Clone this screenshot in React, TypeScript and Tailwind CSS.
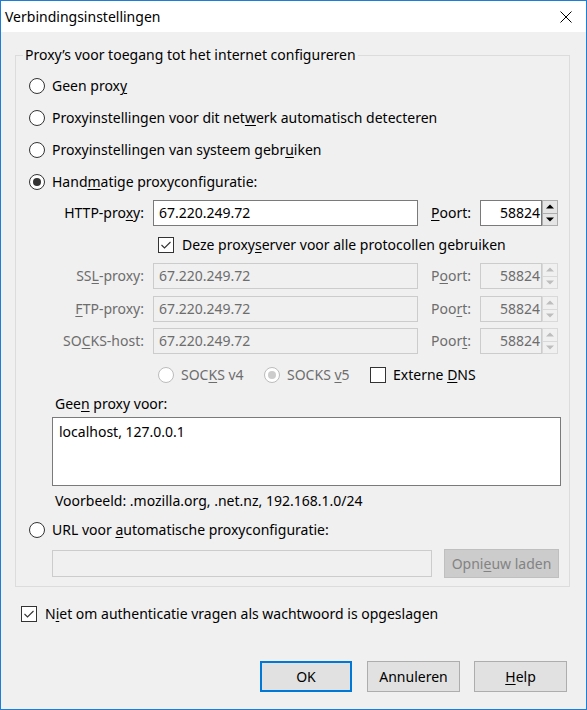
import React from "react";

function Radio({ checked = false, disabled = false }: { checked?: boolean; disabled?: boolean }) {
  return (
    <span
      className={`w-[16px] h-[16px] rounded-full border bg-white shrink-0 flex items-center justify-center ${
        disabled ? "border-[#bcbcbc]" : "border-[#333333]"
      }`}
    >
      {checked && (
        <span className={`w-[8px] h-[8px] rounded-full ${disabled ? "bg-[#cccccc]" : "bg-[#333333]"}`} />
      )}
    </span>
  );
}

function Check({ checked = false }: { checked?: boolean }) {
  return (
    <span className="w-[16px] h-[16px] border border-[#333333] bg-white shrink-0 flex items-center justify-center">
      {checked && (
        <svg width="12" height="12" viewBox="0 0 12 12">
          <path d="M1.5 6 L4.5 9 L10.5 3" fill="none" stroke="#333333" strokeWidth="1.1" />
        </svg>
      )}
    </span>
  );
}

function U({ children }: { children: React.ReactNode }) {
  return <span className="underline underline-offset-[2px] decoration-1">{children}</span>;
}

function Arrow({ up, color }: { up: boolean; color: string }) {
  return (
    <svg width="8" height="5" viewBox="0 0 8 5">
      <polygon points={up ? "0,4.5 8,4.5 4,0.5" : "0,0.5 8,0.5 4,4.5"} fill={color} />
    </svg>
  );
}

function Spinner({ disabled = false }: { disabled?: boolean }) {
  const c = disabled ? "#bdbdbd" : "#000000";
  return (
    <div className="w-[16px] h-full flex flex-col">
      <div
        className={`flex-1 flex items-center justify-center border ${
          disabled ? "border-[#d9d9d9] bg-[#f0f0f0]" : "border-[#adadad] bg-[#e5e5e5]"
        }`}
      >
        <Arrow up color={c} />
      </div>
      <div
        className={`flex-1 flex items-center justify-center border border-t-0 ${
          disabled ? "border-[#d9d9d9] bg-[#f0f0f0]" : "border-[#adadad] bg-[#e5e5e5]"
        }`}
      >
        <Arrow up={false} color={c} />
      </div>
    </div>
  );
}

function ProxyRow({
  label,
  port,
  disabled = false,
}: {
  label: React.ReactNode;
  port: React.ReactNode;
  disabled?: boolean;
}) {
  return (
    <div className={`h-[26px] flex items-center ${disabled ? "text-[#6d6d6d]" : "text-black"}`}>
      <span className="w-[128px] text-right whitespace-nowrap">{label}</span>
      <div
        className={`ml-[9px] w-[265px] h-full border flex items-center pl-[5px] ${
          disabled ? "border-[#cccccc] bg-[#f0f0f0]" : "border-[#7a7a7a] bg-white"
        }`}
      >
        67.220.249.72
      </div>
      <span className="ml-[13px] w-[49px] whitespace-nowrap">{port}</span>
      <div
        className={`w-[62px] h-full border flex items-center justify-end pr-[1px] ${
          disabled ? "border-[#cccccc] bg-[#f0f0f0]" : "border-[#7a7a7a] bg-white"
        }`}
      >
        58824
      </div>
      <Spinner disabled={disabled} />
    </div>
  );
}

export default function App() {
  return (
    <div className="w-[587px] h-[710px] border border-[#1c7ed6] bg-[#f0f0f0] flex flex-col font-['Noto_Sans',sans-serif] text-[14px] text-black leading-[20px]">
      <div className="h-[31px] bg-white flex items-center justify-between pl-[4px] pr-[14px] shrink-0">
        <span>Verbindingsinstellingen</span>
        <svg width="12" height="12" viewBox="0 0 12 12">
          <path d="M0.5 0.5 L11.5 11.5 M11.5 0.5 L0.5 11.5" stroke="#000000" strokeWidth="1" />
        </svg>
      </div>

      <fieldset className="mt-[13px] ml-[14px] w-[555px] border border-[#dcdcdc] pb-[8px]">
        <legend className="ml-[7px] px-[2px] leading-[20px]">Proxy’s voor toegang tot het internet configureren</legend>

        <div className="mt-[5px] flex flex-col">
          <div className="h-[32px] flex items-center pl-[13px] gap-[7px]">
            <Radio />
            <span>
              Geen prox<U>y</U>
            </span>
          </div>
          <div className="h-[32px] flex items-center pl-[13px] gap-[7px]">
            <Radio />
            <span>
              Proxyinstellingen voor dit net<U>w</U>erk automatisch detecteren
            </span>
          </div>
          <div className="h-[32px] flex items-center pl-[13px] gap-[7px]">
            <Radio />
            <span>
              Proxyinstellingen van systeem gebr<U>u</U>iken
            </span>
          </div>
          <div className="h-[32px] flex items-center pl-[13px] gap-[7px]">
            <Radio checked />
            <span>
              Hand<U>m</U>atige proxyconfiguratie:
            </span>
          </div>

          <div className="mt-[2px]">
            <ProxyRow
              label={
                <>
                  HTTP-pro<U>x</U>y:
                </>
              }
              port={
                <>
                  <U>P</U>oort:
                </>
              }
            />
          </div>

          <div className="h-[37px] flex items-center pl-[142px] gap-[8px]">
            <Check checked />
            <span>
              Deze proxy<U>s</U>erver voor alle protocollen gebruiken
            </span>
          </div>

          <ProxyRow
            disabled
            label={
              <>
                SS<U>L</U>-proxy:
              </>
            }
            port={
              <>
                P<U>o</U>ort:
              </>
            }
          />
          <div className="mt-[7px]">
            <ProxyRow
              disabled
              label={
                <>
                  <U>F</U>TP-proxy:
                </>
              }
              port={
                <>
                  Poo<U>r</U>t:
                </>
              }
            />
          </div>
          <div className="mt-[6px]">
            <ProxyRow
              disabled
              label={
                <>
                  SO<U>C</U>KS-host:
                </>
              }
              port={
                <>
                  Poor<U>t</U>:
                </>
              }
            />
          </div>

          <div className="mt-[1px] h-[40px] flex items-center pl-[142px]">
            <Radio disabled />
            <span className="ml-[7px] w-[83px] text-[#6d6d6d]">
              SOC<U>K</U>S v4
            </span>
            <Radio checked disabled />
            <span className="ml-[7px] w-[83px] text-[#6d6d6d]">
              SOCKS <U>v</U>5
            </span>
            <Check />
            <span className="ml-[7px]">
              Externe <U>D</U>NS
            </span>
          </div>

          <div className="h-[18px] flex items-center pl-[39px]">
            <span>
              Gee<U>n</U> proxy voor:
            </span>
          </div>

          <div className="mt-[4px] ml-[36px] w-[509px] h-[69px] border border-[#7a7a7a] bg-white pl-[6px] pt-[4px]">
            localhost, 127.0.0.1
          </div>

          <div className="h-[30px] flex items-center pl-[39px]">
            Voorbeeld: .mozilla.org, .net.nz, 192.168.1.0/24
          </div>

          <div className="h-[28px] flex items-center pl-[13px] gap-[7px]">
            <Radio />
            <span>
              URL voor <U>a</U>utomatische proxyconfiguratie:
            </span>
          </div>

          <div className="mt-[5px] h-[29px] flex items-center pl-[36px]">
            <div className="w-[380px] h-[27px] border border-[#cccccc] bg-[#f0f0f0]" />
            <div className="ml-[12px] w-[115px] h-[29px] border border-[#bfbfbf] bg-[#cccccc] text-[#838383] flex items-center justify-center">
              <span>
                Opni<U>e</U>uw laden
              </span>
            </div>
          </div>
        </div>
      </fieldset>

      <div className="mt-[12px] h-[30px] flex items-center pl-[20px] gap-[8px]">
        <Check checked />
        <span>
          N<U>i</U>et om authenticatie vragen als wachtwoord is opgeslagen
        </span>
      </div>

      <div className="mt-[32px] h-[31px] flex items-center pl-[259px]">
        <div className="w-[92px] h-[31px] border-2 border-[#0078d7] bg-[#e1e1e1] flex items-center justify-center">
          OK
        </div>
        <div className="ml-[15px] w-[93px] h-[31px] border border-[#adadad] bg-[#e1e1e1] flex items-center justify-center">
          Annuleren
        </div>
        <div className="ml-[14px] w-[93px] h-[31px] border border-[#adadad] bg-[#e1e1e1] flex items-center justify-center">
          <span>
            <U>H</U>elp
          </span>
        </div>
      </div>
    </div>
  );
}
